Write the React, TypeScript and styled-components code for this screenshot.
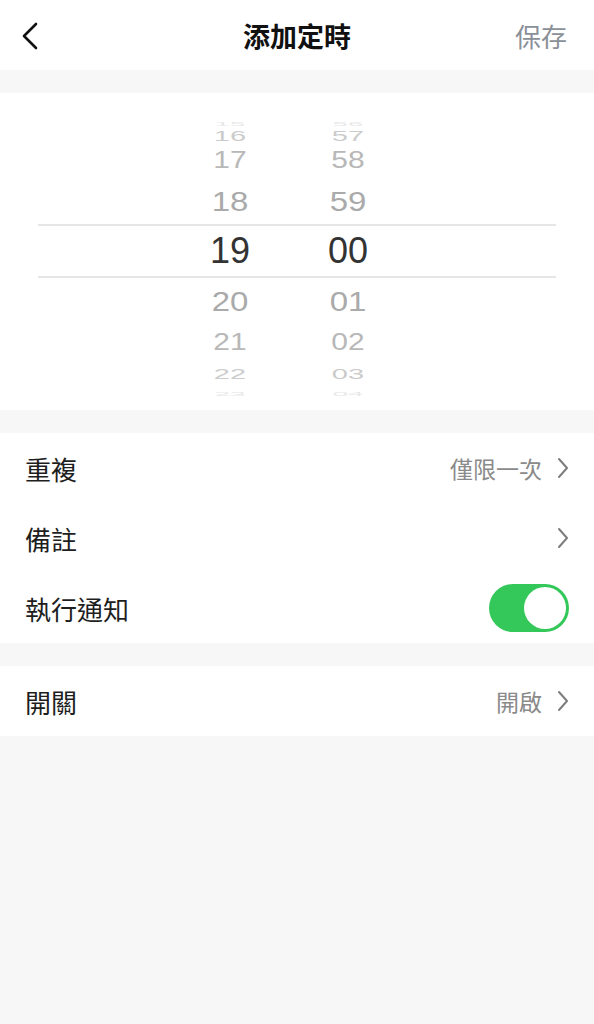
import styled, { createGlobalStyle } from "styled-components";

const GlobalStyle = createGlobalStyle`
  html, body {
    margin: 0;
    padding: 0;
    background: #f7f7f7;
    font-family: "Liberation Sans", "Noto Sans CJK TC", sans-serif;
  }
`;

type Slot = { h: number; size: number; scale: number; color: string };

const slots: Record<number, Slot> = {
  4: { h: 12, size: 28, scale: 0.2, color: "#e8e8e8" },
  3: { h: 20, size: 29, scale: 0.5, color: "#cbcbcb" },
  2: { h: 36, size: 30, scale: 0.8, color: "#b8b8b8" },
  1: { h: 46, size: 33, scale: 0.84, color: "#aaaaaa" },
  0: { h: 54, size: 36, scale: 1, color: "#333333" },
};

const hours = [15, 16, 17, 18, 19, 20, 21, 22, 23];
const minutes = [56, 57, 58, 59, 0, 1, 2, 3, 4];

const pad = (n: number) => String(n).padStart(2, "0");

function Chevron() {
  return (
    <svg width="12" height="22" viewBox="0 0 12 22">
      <path d="M2 2 L10 11 L2 20" fill="none" stroke="#7d7d7d" strokeWidth="2" strokeLinecap="round" strokeLinejoin="round" />
    </svg>
  );
}

export default function App() {
  return (
    <Page>
      <GlobalStyle />
      <Header>
        <BackButton>
          <svg width="18" height="28" viewBox="0 0 18 28">
            <path d="M15 2 L3 14 L15 26" fill="none" stroke="#111" strokeWidth="2.6" strokeLinecap="round" strokeLinejoin="round" />
          </svg>
        </BackButton>
        <Title>添加定時</Title>
        <SaveButton>保存</SaveButton>
      </Header>

      <Picker>
        <Wheel>
          {hours.map((hr, i) => {
            const s = slots[Math.abs(i - 4)];
            return (
              <WheelRow key={hr} $h={s.h} $selected={i === 4}>
                <Cell $size={s.size} $scale={s.scale} $color={s.color}>{hr}</Cell>
                <Cell $size={s.size} $scale={s.scale} $color={s.color}>{pad(minutes[i])}</Cell>
              </WheelRow>
            );
          })}
        </Wheel>
      </Picker>

      <Group>
        <Row>
          <Label>重複</Label>
          <Value>
            僅限一次
            <Chevron />
          </Value>
        </Row>
        <Row>
          <Label>備註</Label>
          <Value>
            <Chevron />
          </Value>
        </Row>
        <Row>
          <Label>執行通知</Label>
          <Toggle>
            <Knob />
          </Toggle>
        </Row>
      </Group>

      <Group>
        <Row>
          <Label>開關</Label>
          <Value>
            開啟
            <Chevron />
          </Value>
        </Row>
      </Group>
    </Page>
  );
}

const Page = styled.div`
  min-height: 1024px;
  background: #f7f7f7;
`;

const Header = styled.header`
  height: 70px;
  background: #fff;
  display: flex;
  align-items: center;
  justify-content: space-between;
  padding: 0 27px 0 21px;
  position: relative;
`;

const BackButton = styled.div`
  display: flex;
  align-items: center;
  margin-top: 1px;
`;

const Title = styled.h1`
  position: absolute;
  left: 0;
  right: 0;
  text-align: center;
  margin: 0;
  font-size: 27px;
  font-weight: 700;
  color: #111;
  pointer-events: none;
`;

const SaveButton = styled.div`
  font-size: 26px;
  color: #8a9098;
`;

const Picker = styled.section`
  margin-top: 23px;
  background: #fff;
  padding: 17px 38px 18px;
`;

const Wheel = styled.div`
  display: flex;
  flex-direction: column;
`;

const WheelRow = styled.div<{ $h: number; $selected: boolean }>`
  height: ${(p) => p.$h}px;
  display: grid;
  grid-template-columns: 133px 118px 118px 1fr;
  align-items: center;
  box-sizing: border-box;
  ${(p) => (p.$selected ? "border-top: 2px solid #e6e6e6; border-bottom: 2px solid #e6e6e6;" : "")}
  & > :first-child { grid-column: 2; }
`;

const Cell = styled.div<{ $size: number; $scale: number; $color: string }>`
  text-align: center;
  font-size: ${(p) => p.$size}px;
  line-height: 1;
  color: ${(p) => p.$color};
  transform: scaleY(${(p) => p.$scale});
`;

const Group = styled.section`
  margin-top: 23px;
  background: #fff;
`;

const Row = styled.div`
  height: 70px;
  display: flex;
  align-items: center;
  justify-content: space-between;
  padding: 0 25px;
`;

const Label = styled.div`
  font-size: 26px;
  color: #1e1e1e;
`;

const Value = styled.div`
  display: flex;
  align-items: center;
  gap: 15px;
  font-size: 23px;
  color: #8a8a8a;
`;

const Toggle = styled.div`
  width: 80px;
  height: 48px;
  border-radius: 24px;
  background: #34c759;
  display: flex;
  align-items: center;
  justify-content: flex-end;
  padding: 3px;
  box-sizing: border-box;
`;

const Knob = styled.div`
  width: 42px;
  height: 42px;
  border-radius: 50%;
  background: #fff;
`;
